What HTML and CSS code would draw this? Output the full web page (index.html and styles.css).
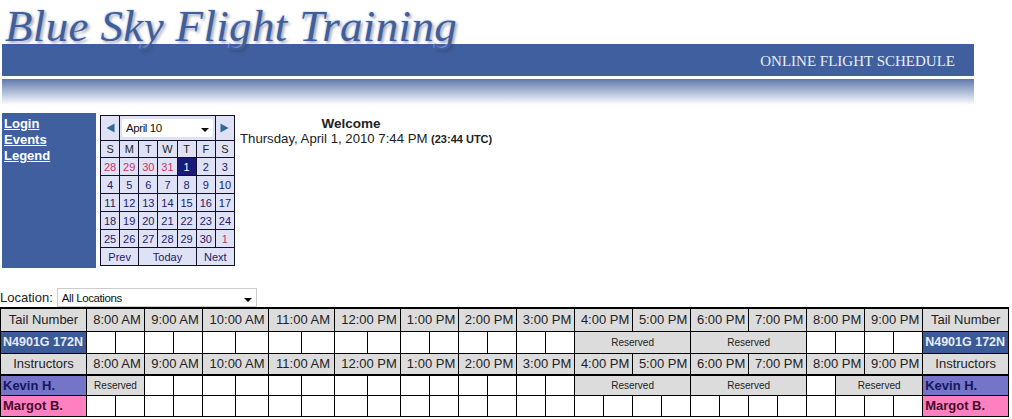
FILE: index.html
```html
<!DOCTYPE html>
<html lang="en">
<head>
  <meta charset="UTF-8">
  <title>Blue Sky Flight Training - Online Flight Schedule</title>
  <link rel="stylesheet" href="styles.css">
</head>
<body>
  <header class="banner">
    <div class="logo">Blue Sky Flight Training</div>
    <div class="band">ONLINE FLIGHT SCHEDULE</div>
    <div class="fade"></div>
  </header>

  <div class="top">
    <nav class="menu">
      <a href="#">Login</a>
      <a href="#">Events</a>
      <a href="#">Legend</a>
    </nav>

    <table class="calendar">
      <tr class="cal-head">
        <td><svg class="arrow" width="9" height="10" viewBox="0 0 9 10"><path d="M8.5 0.5V9.5L0.5 5Z"/></svg></td>
        <td colspan="5">
          <div class="select-wrap month-select">
            <select><option>April 10</option></select>
          </div>
        </td>
        <td><svg class="arrow" width="9" height="10" viewBox="0 0 9 10"><path d="M0.5 0.5V9.5L8.5 5Z"/></svg></td>
      </tr>
      <tr class="cal-days"><td>S</td><td>M</td><td>T</td><td>W</td><td>T</td><td>F</td><td>S</td></tr>
      <tr><td class="other">28</td><td class="other">29</td><td class="other">30</td><td class="other">31</td><td class="today">1</td><td>2</td><td>3</td></tr>
      <tr><td>4</td><td>5</td><td>6</td><td>7</td><td>8</td><td>9</td><td>10</td></tr>
      <tr><td>11</td><td>12</td><td>13</td><td>14</td><td>15</td><td>16</td><td>17</td></tr>
      <tr><td>18</td><td>19</td><td>20</td><td>21</td><td>22</td><td>23</td><td>24</td></tr>
      <tr><td>25</td><td>26</td><td>27</td><td>28</td><td>29</td><td>30</td><td class="other">1</td></tr>
      <tr class="cal-foot"><td colspan="2">Prev</td><td colspan="3">Today</td><td colspan="2">Next</td></tr>
    </table>

    <div class="welcome">
      <h1>Welcome</h1>
      <p>Thursday, April 1, 2010 7:44 PM <b>(23:44 UTC)</b></p>
    </div>
  </div>

  <div class="location">
    <label>Location:</label>
    <div class="select-wrap location-select">
      <select><option>All Locations</option></select>
    </div>
  </div>

  <table class="schedule">
    <colgroup>
      <col class="name">
      <col class="half"><col class="half"><col class="half"><col class="half">
      <col class="wide"><col class="wide"><col class="wide"><col class="wide"><col class="wide"><col class="wide">
      <col class="half"><col class="half"><col class="half"><col class="half"><col class="half"><col class="half">
      <col class="half"><col class="half"><col class="half"><col class="half"><col class="half"><col class="half">
      <col class="half"><col class="half"><col class="half"><col class="half"><col class="half"><col class="half">
      <col class="name">
    </colgroup>
    <tr class="hours first">
      <th>Tail Number</th>
      <th colspan="2">8:00 AM</th><th colspan="2">9:00 AM</th><th colspan="2">10:00 AM</th><th colspan="2">11:00 AM</th>
      <th colspan="2">12:00 PM</th><th colspan="2">1:00 PM</th><th colspan="2">2:00 PM</th><th colspan="2">3:00 PM</th>
      <th colspan="2">4:00 PM</th><th colspan="2">5:00 PM</th><th colspan="2">6:00 PM</th><th colspan="2">7:00 PM</th>
      <th colspan="2">8:00 PM</th><th colspan="2">9:00 PM</th>
      <th>Tail Number</th>
    </tr>
    <tr class="plane-row">
      <td class="plane">N4901G 172N</td>
      <td></td><td></td><td></td><td></td><td></td><td></td><td></td><td></td>
      <td></td><td></td><td></td><td></td><td></td><td></td><td></td><td></td>
      <td class="reserved" colspan="4">Reserved</td>
      <td class="reserved" colspan="4">Reserved</td>
      <td></td><td></td><td></td><td></td>
      <td class="plane">N4901G 172N</td>
    </tr>
    <tr class="hours second">
      <th>Instructors</th>
      <th colspan="2">8:00 AM</th><th colspan="2">9:00 AM</th><th colspan="2">10:00 AM</th><th colspan="2">11:00 AM</th>
      <th colspan="2">12:00 PM</th><th colspan="2">1:00 PM</th><th colspan="2">2:00 PM</th><th colspan="2">3:00 PM</th>
      <th colspan="2">4:00 PM</th><th colspan="2">5:00 PM</th><th colspan="2">6:00 PM</th><th colspan="2">7:00 PM</th>
      <th colspan="2">8:00 PM</th><th colspan="2">9:00 PM</th>
      <th>Instructors</th>
    </tr>
    <tr class="kevin-row">
      <td class="kevin">Kevin H.</td>
      <td class="reserved" colspan="2">Reserved</td>
      <td></td><td></td><td></td><td></td><td></td><td></td><td></td>
      <td></td><td></td><td></td><td></td><td></td><td></td><td></td>
      <td class="reserved" colspan="4">Reserved</td>
      <td class="reserved" colspan="4">Reserved</td>
      <td></td>
      <td class="reserved" colspan="3">Reserved</td>
      <td class="kevin">Kevin H.</td>
    </tr>
    <tr class="last">
      <td class="margot">Margot B.</td>
      <td></td><td></td><td></td><td></td><td></td><td></td><td></td>
      <td></td><td></td><td></td><td></td><td></td><td></td><td></td>
      <td></td><td></td><td></td><td></td><td></td><td></td><td></td>
      <td></td><td></td><td></td><td></td><td></td><td></td><td></td>
      <td class="margot">Margot B.</td>
    </tr>
  </table>
</body>
</html>
```

FILE: styles.css
```css
body {
  margin: 0;
  font-family: "Liberation Sans", Arial, sans-serif;
  font-size: 13px;
  color: #222;
  background: #fff;
  overflow: hidden;
}

.banner {
  width: 972px;
  margin-left: 2px;
}

.logo {
  height: 44px;
  margin-left: 3px;
  font-family: "Liberation Serif", serif;
  font-style: italic;
  font-size: 45px;
  line-height: 52px;
  letter-spacing: 0.35px;
  white-space: nowrap;
  color: #3f5f9c;
  text-shadow: -1px -1px 1px rgba(190, 205, 235, 0.5), 2px 2px 3px rgba(50, 60, 100, 0.45);
}

.band {
  height: 32px;
  padding-right: 19px;
  background-color: #3f5f9f;
  color: #e9eef8;
  font-family: "Liberation Serif", serif;
  font-size: 15px;
  line-height: 35px;
  text-align: right;
}

.fade {
  height: 26px;
  margin-top: 3px;
  background: linear-gradient(#5f79ad, #fff);
}

.top {
  display: flex;
  align-items: flex-start;
  height: 155px;
  margin-top: 8px;
}

.menu {
  display: flex;
  flex-direction: column;
  width: 92px;
  height: 152px;
  margin-left: 2px;
  padding: 3px 0 0 2px;
  background-color: #3f5f9f;
}

.menu a {
  color: #fff;
  font-size: 13px;
  font-weight: bold;
  line-height: 16px;
}

/* calendar */

.calendar {
  width: 135px;
  margin: 2px 0 0 4px;
  border-collapse: collapse;
  table-layout: fixed;
  background-color: #dfe2f4;
  color: #20206c;
  font-size: 11px;
}

.calendar td {
  height: 17px;
  padding: 0;
  border: 1px solid #10102a;
  text-align: center;
}

.calendar .cal-head td {
  height: 24px;
}

.arrow {
  display: block;
  margin: 0 auto;
  fill: #2f6a9c;
}

.calendar .cal-days td {
  height: 16px;
  color: #222;
}

.calendar .other {
  color: #c33566;
}

.calendar .today {
  background-color: #1a1a78;
  color: #fff;
}

.select-wrap {
  position: relative;
  box-sizing: border-box;
}

.select-wrap::after {
  content: "";
  position: absolute;
  top: 50%;
  right: 4px;
  border-top: 4px solid #000;
  border-left: 4px solid transparent;
  border-right: 4px solid transparent;
}

.select-wrap select {
  display: block;
  width: 100%;
  height: 100%;
  padding: 0 0 0 4px;
  border: 0;
  border-radius: 2px;
  background: #fff;
  color: #111;
  font-family: inherit;
  font-size: 11.5px;
  letter-spacing: -0.4px;
  appearance: none;
}

.month-select {
  width: 91px;
  height: 18px;
  margin: 0 auto;
}

/* welcome text */

.welcome {
  width: 252px;
  margin-left: 5px;
  white-space: nowrap;
}

.welcome h1 {
  margin: 3px 30px 0 0;
  font-size: 13.5px;
  line-height: 15px;
  text-align: center;
}

.welcome p {
  margin: 0;
  font-size: 13.2px;
  line-height: 16px;
}

.welcome b {
  font-size: 11px;
}

/* location picker */

.location {
  display: flex;
  align-items: flex-end;
  gap: 4px;
  height: 19px;
  margin-top: 20px;
}

.location label {
  font-size: 13px;
  line-height: 19px;
}

.location-select {
  width: 200px;
  height: 19px;
  border: 1px solid #ccc;
}

/* schedule */

.schedule {
  width: 1008px;
  border-collapse: collapse;
  table-layout: fixed;
}

.schedule col.name {
  width: 86px;
}

.schedule col.half {
  width: 29px;
}

.schedule col.wide {
  width: 33px;
}

.schedule .first {
  height: 23px;
}

.schedule .plane-row,
.schedule .second {
  height: 22px;
}

.schedule .kevin-row {
  height: 20px;
}

.schedule .last {
  height: 21px;
}

.schedule th,
.schedule td {
  padding: 0;
  border: 1px solid #000;
  font-size: 10px;
  text-align: center;
  white-space: nowrap;
  overflow: hidden;
}

.schedule th {
  background-color: #dcdcdc;
  color: #222;
  font-size: 13px;
  font-weight: normal;
}

.schedule th[colspan] {
  padding-left: 3px;
}

.schedule .first th {
  border-top-width: 2px;
}

.schedule .second th {
  border-bottom-width: 2px;
}

.schedule .reserved {
  background-color: #dcdcdc;
  color: #222;
}

.schedule .plane,
.schedule .kevin,
.schedule .margot {
  padding-left: 2px;
  font-size: 13px;
  font-weight: bold;
  text-align: left;
}

.schedule .plane {
  background-color: #3b5a98;
  color: #e6ecf8;
  font-size: 12.5px;
}

.schedule .kevin {
  background-color: #7474c8;
  color: #16165e;
}

.schedule .margot {
  background-color: #ff80c0;
  color: #4a0c2c;
}
```
